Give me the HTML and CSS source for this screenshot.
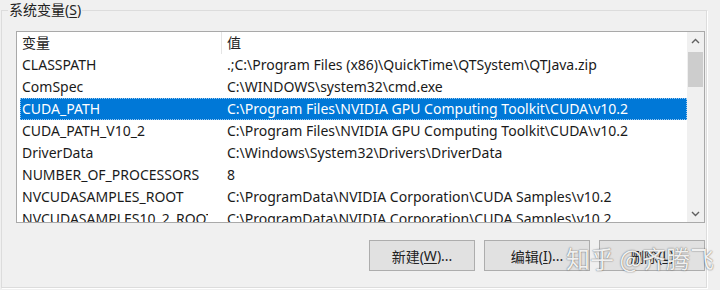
FILE: index.html
```html
<!DOCTYPE html>
<html lang="zh">
<head>
<meta charset="utf-8">
<link rel="stylesheet" href="styles.css">
</head>
<body>
<div class="group">
  <div class="legend">系统变量(<u>S</u>)</div>
  <div class="list">
    <div class="content">
      <div class="header">
        <div class="hcell name">变量</div>
        <div class="hcell value">值</div>
      </div>
      <div class="row"><div class="cell name">CLASSPATH</div><div class="cell value">.;C:\Program Files (x86)\QuickTime\QTSystem\QTJava.zip</div></div>
      <div class="row"><div class="cell name">ComSpec</div><div class="cell value">C:\WINDOWS\system32\cmd.exe</div></div>
      <div class="row selected"><div class="cell name">CUDA_PATH</div><div class="cell value">C:\Program Files\NVIDIA GPU Computing Toolkit\CUDA\v10.2</div></div>
      <div class="row"><div class="cell name">CUDA_PATH_V10_2</div><div class="cell value">C:\Program Files\NVIDIA GPU Computing Toolkit\CUDA\v10.2</div></div>
      <div class="row"><div class="cell name">DriverData</div><div class="cell value">C:\Windows\System32\Drivers\DriverData</div></div>
      <div class="row"><div class="cell name">NUMBER_OF_PROCESSORS</div><div class="cell value">8</div></div>
      <div class="row"><div class="cell name">NVCUDASAMPLES_ROOT</div><div class="cell value">C:\ProgramData\NVIDIA Corporation\CUDA Samples\v10.2</div></div>
      <div class="row"><div class="cell name">NVCUDASAMPLES10_2_ROOT</div><div class="cell value">C:\ProgramData\NVIDIA Corporation\CUDA Samples\v10.2</div></div>
    </div>
    <div class="scrollbar">
      <div class="arrow"><svg width="9" height="6" viewBox="0 0 9 6"><path d="M1 5 L4.5 1.5 L8 5" fill="none" stroke="#606060" stroke-width="1.4"/></svg></div>
      <div class="track"><div class="thumb"></div></div>
      <div class="arrow"><svg width="9" height="6" viewBox="0 0 9 6"><path d="M1 1 L4.5 4.5 L8 1" fill="none" stroke="#606060" stroke-width="1.4"/></svg></div>
    </div>
  </div>
  <div class="buttons">
    <div class="btn">新建(<u>W</u>)...</div>
    <div class="btn">编辑(<u>I</u>)...</div>
    <div class="btn">删除(<u>L</u>)</div>
  </div>
</div>
<div class="watermark">知乎 @齐腾飞</div>
</body>
</html>
```
FILE: styles.css
```css
html, body {
  margin: 0;
  padding: 0;
  background: #f0f0f0;
  width: 720px;
  height: 290px;
  overflow: hidden;
  font-family: "Noto Sans", "Noto Sans CJK SC", sans-serif;
  font-size: 14px;
  color: #000;
}
body { position: relative; }

.group {
  margin: 10px 0 0 1px;
  width: 707px;
  height: 279px;
  box-sizing: border-box;
  border: 1px solid #dcdcdc;
  border-right-color: #ffffff;
  border-bottom-color: #ffffff;
  box-shadow: inset -1px -1px 0 #dcdcdc;
}
.legend {
  width: fit-content;
  margin: -11px 0 0 6px;
  padding: 0 1px;
  background: #f0f0f0;
  line-height: 20px;
  color: #222;
}
.legend u, .btn u { text-underline-offset: 2px; }

.list {
  margin: 11px 0 0 14px;
  width: 689px;
  height: 192px;
  box-sizing: border-box;
  border: 1px solid #a9a9a9;
  background: #fff;
  display: flex;
  overflow: hidden;
}
.content {
  flex: 1;
  overflow: hidden;
}
.header, .row {
  display: flex;
  height: 22px;
  line-height: 22px;
  white-space: nowrap;
  margin-left: 3px;
}
.name {
  width: 202px;
  padding-left: 2px;
  box-sizing: border-box;
  flex: none;
}
.cell.name {
  overflow: hidden;
  width: 188px;
  margin-right: 14px;
}
.value {
  padding-left: 5px;
  flex: 1;
}
.hcell.name { border-right: 1px solid #e5e5e5; }
.hcell { color: #222; }
.cell { color: #1a1a1a; }
.row.selected {
  background: #0078d7;
  outline: 1px dotted #9cc8ef;
  outline-offset: -1px;
}
.row.selected .cell { color: #fff; }

.scrollbar {
  width: 17px;
  flex: none;
  background: #f0f0f0;
  display: flex;
  flex-direction: column;
}
.arrow {
  height: 17px;
  display: flex;
  align-items: center;
  justify-content: center;
}
.track {
  flex: 1;
  padding: 3px 1px 0 1px;
}
.thumb {
  height: 35px;
  background: #cdcdcd;
}

.buttons {
  display: flex;
  gap: 9px;
  margin: 17px 0 0 367px;
}
.btn {
  width: 106px;
  height: 31px;
  box-sizing: border-box;
  border: 1px solid #adadad;
  background: #e1e1e1;
  display: flex;
  align-items: center;
  justify-content: center;
  color: #222;
}

.watermark {
  position: absolute;
  left: 566px;
  top: 242px;
  font-family: "Noto Sans CJK SC", sans-serif;
  font-size: 24px;
  line-height: 32px;
  color: rgba(255, 255, 255, 0.92);
  text-shadow: 0 0 1px rgba(0,0,0,0.45), 0 0 2px rgba(0,0,0,0.35);
  white-space: nowrap;
}
```
